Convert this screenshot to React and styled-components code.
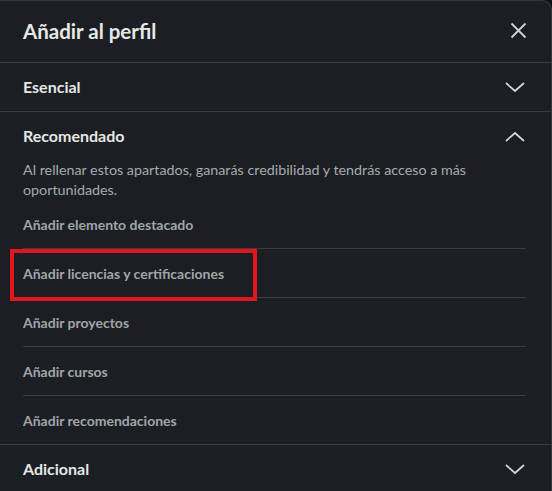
import styled, { createGlobalStyle } from "styled-components";

const GlobalStyle = createGlobalStyle`
    html, body {
        margin: 0;
        padding: 0;
        background: #101214;
    }
    body {
        font-family: "Segoe UI", "Lato", "Noto Sans", sans-serif;
    }
`;

const Modal = styled.div`
    width: 552px;
    height: 491px;
    box-sizing: border-box;
    background: #1b1f23;
    border-top: 1px solid #34383c;
    border-right: 1px solid #34383c;
    border-top-right-radius: 10px;
    overflow: hidden;
    color: rgba(255, 255, 255, 0.9);
`;

const Header = styled.div`
    height: 61px;
    display: flex;
    align-items: center;
    justify-content: space-between;
    padding: 0 23px;
    border-bottom: 1px solid #3a3d40;
`;

const Title = styled.h2`
    margin: 0;
    font-size: 20.5px;
    font-weight: 700;
    color: #e8e8e8;
    padding-bottom: 2px;
`;

const IconButton = styled.button`
    background: none;
    border: none;
    padding: 0;
    display: flex;
    color: #d0d0d0;
    cursor: pointer;
    margin-right: 1px;
    margin-bottom: 2px;
`;

const Section = styled.div`
    border-bottom: ${(p) => (p.$last ? "none" : "1px solid #3a3d40")};
`;

const SectionHead = styled.div`
    height: 48px;
    display: flex;
    align-items: center;
    justify-content: space-between;
    padding: 0 26px 0 23px;
`;

const SectionTitle = styled.h3`
    margin: 0;
    font-size: 16px;
    font-weight: 700;
    color: #e6e6e6;
    padding-bottom: 2px;
`;

const Description = styled.p`
    margin: 0;
    padding: 0 23px 0 23px;
    font-size: 14.3px;
    line-height: 20px;
    color: #a8aaad;
`;

const ItemList = styled.div`
    padding: 0 25px 0 23px;
`;

const Item = styled.div`
    position: relative;
    height: 48px;
    display: flex;
    align-items: center;
    font-size: 14px;
    font-weight: 700;
    color: #a3a5a8;
    border-bottom: ${(p) => (p.$last ? "none" : "1px solid #3a3d40")};
`;

const Highlight = styled.div`
    position: absolute;
    top: 0;
    left: -13px;
    width: 247px;
    height: 52px;
    box-sizing: border-box;
    border: 4px solid #e2161d;
    pointer-events: none;
`;

const Chevron = ({ up }) => (
    <svg width="20" height="11" viewBox="0 0 20 11" fill="none">
        <path
            d={up ? "M1 10 L10 2 L19 10" : "M1 1 L10 9 L19 1"}
            stroke="#d6d6d6"
            strokeWidth="1.7"
        />
    </svg>
);

const Close = () => (
    <svg width="17" height="17" viewBox="0 0 17 17" fill="none">
        <path d="M1.5 1.5 L15.5 15.5 M15.5 1.5 L1.5 15.5" stroke="#d0d0d0" strokeWidth="1.8" />
    </svg>
);

const items = [
    "Añadir elemento destacado",
    "Añadir licencias y certificaciones",
    "Añadir proyectos",
    "Añadir cursos",
    "Añadir recomendaciones",
];

const App = () => {
    return (
        <>
            <GlobalStyle />
            <Modal>
                <Header>
                    <Title>Añadir al perfil</Title>
                    <IconButton>
                        <Close />
                    </IconButton>
                </Header>

                <Section>
                    <SectionHead>
                        <SectionTitle>Esencial</SectionTitle>
                        <Chevron />
                    </SectionHead>
                </Section>

                <Section>
                    <SectionHead>
                        <SectionTitle>Recomendado</SectionTitle>
                        <Chevron up />
                    </SectionHead>
                    <Description>
                        Al rellenar estos apartados, ganarás credibilidad y tendrás acceso a más oportunidades.
                    </Description>
                    <ItemList>
                        {items.map((label, i) => (
                            <Item key={label} $last={i === items.length - 1}>
                                {label}
                                {i === 1 && <Highlight />}
                            </Item>
                        ))}
                    </ItemList>
                </Section>

                <Section $last>
                    <SectionHead>
                        <SectionTitle>Adicional</SectionTitle>
                        <Chevron />
                    </SectionHead>
                </Section>
            </Modal>
        </>
    );
};

export default App;
